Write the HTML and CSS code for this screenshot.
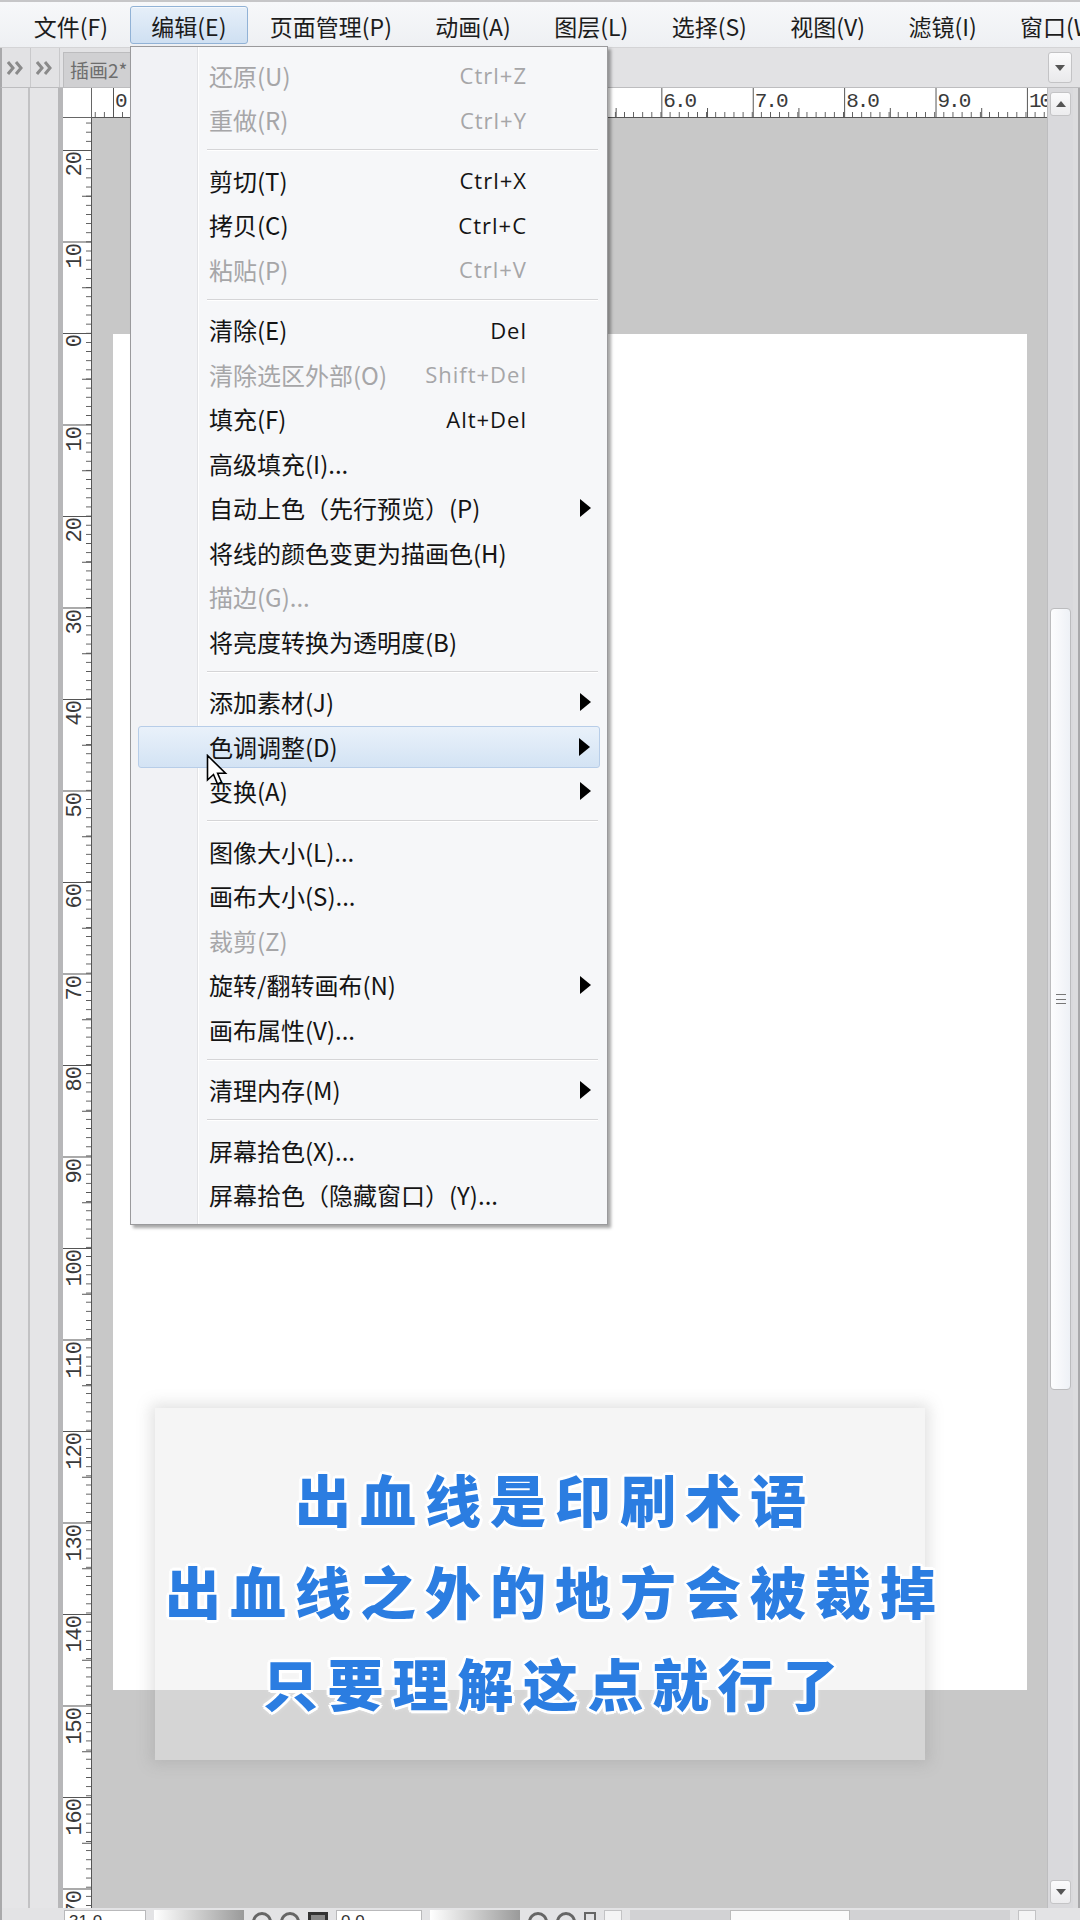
FILE: index.html
```html
<!DOCTYPE html>
<html lang="zh-CN">
<head>
<meta charset="utf-8">
<title>编辑菜单</title>
<link rel="stylesheet" href="styles.css">
</head>
<body>
<div class="app">
  <div class="menubar">
    <span class="mb-item">文件(F)</span>
    <span class="mb-item active">编辑(E)</span>
    <span class="mb-item">页面管理(P)</span>
    <span class="mb-item">动画(A)</span>
    <span class="mb-item">图层(L)</span>
    <span class="mb-item">选择(S)</span>
    <span class="mb-item">视图(V)</span>
    <span class="mb-item">滤镜(I)</span>
    <span class="mb-item">窗口(W)</span>
  </div>
  <div class="tabbar">
    <div class="dock"><svg width="18" height="16" viewBox="0 0 18 16"><path d="M1 2 L6 8 L1 14 M9 2 L14 8 L9 14" fill="none" stroke="#8a8a8a" stroke-width="3"/></svg></div>
    <div class="dock"><svg width="18" height="16" viewBox="0 0 18 16"><path d="M1 2 L6 8 L1 14 M9 2 L14 8 L9 14" fill="none" stroke="#8a8a8a" stroke-width="3"/></svg></div>
    <div class="tab">插画2*</div>
    <div class="tab-fill"></div>
    <div class="tab-drop"><svg width="10" height="6" viewBox="0 0 10 6"><path d="M0 0 H10 L5 6 Z" fill="#555"/></svg></div>
  </div>
  <div class="workspace">
    <div class="panel"></div>
    <div class="panel"></div>
    <div class="docarea">
      <div class="corner"></div>
      <div class="hruler">
        <span class="hl-lab">0</span><span class="hl-lab">1.0</span><span class="hl-lab">2.0</span><span class="hl-lab">3.0</span><span class="hl-lab">4.0</span><span class="hl-lab">5.0</span><span class="hl-lab">6.0</span><span class="hl-lab">7.0</span><span class="hl-lab">8.0</span><span class="hl-lab">9.0</span><span class="hl-lab">10.0</span>
      </div>
      <div class="vscroll">
        <div class="sb-btn"><svg width="10" height="6" viewBox="0 0 10 6"><path d="M0 6 H10 L5 0 Z" fill="#555"/></svg></div>
        <div class="sb-track"><div class="sb-thumb"><span class="grip"></span></div></div>
        <div class="sb-btn"><svg width="10" height="6" viewBox="0 0 10 6"><path d="M0 0 H10 L5 6 Z" fill="#555"/></svg></div>
      </div>
      <div class="vruler">
        <span class="vl-cell"><span class="vl-lab">20</span></span>
        <span class="vl-cell"><span class="vl-lab">10</span></span>
        <span class="vl-cell"><span class="vl-lab">0</span></span>
        <span class="vl-cell"><span class="vl-lab">10</span></span>
        <span class="vl-cell"><span class="vl-lab">20</span></span>
        <span class="vl-cell"><span class="vl-lab">30</span></span>
        <span class="vl-cell"><span class="vl-lab">40</span></span>
        <span class="vl-cell"><span class="vl-lab">50</span></span>
        <span class="vl-cell"><span class="vl-lab">60</span></span>
        <span class="vl-cell"><span class="vl-lab">70</span></span>
        <span class="vl-cell"><span class="vl-lab">80</span></span>
        <span class="vl-cell"><span class="vl-lab">90</span></span>
        <span class="vl-cell"><span class="vl-lab">100</span></span>
        <span class="vl-cell"><span class="vl-lab">110</span></span>
        <span class="vl-cell"><span class="vl-lab">120</span></span>
        <span class="vl-cell"><span class="vl-lab">130</span></span>
        <span class="vl-cell"><span class="vl-lab">140</span></span>
        <span class="vl-cell"><span class="vl-lab">150</span></span>
        <span class="vl-cell"><span class="vl-lab">160</span></span>
        <span class="vl-cell"><span class="vl-lab">170</span></span>
      </div>
      <div class="canvas"><div class="page"></div></div>
    </div>
    <div class="frame"></div>
  </div>
  <div class="statusbar">
    <span class="sf w50">31.0</span>
    <span class="sslider"></span>
    <span class="sicon round"></span><span class="sicon round"></span><span class="sicon sq"></span>
    <span class="sf w90">0.0</span>
    <span class="sslider"></span>
    <span class="sicon round"></span><span class="sicon round"></span><span class="sicon small"></span>
    <span class="sbtn"></span>
    <span class="strack"><span class="sthumb"></span></span>
    <span class="sbtn"></span>
  </div>
</div>

<div class="menu">
  <div class="mi dis"><span class="ml">还原(U)</span><span class="mk">Ctrl+Z</span><span class="ma"></span></div>
  <div class="mi dis"><span class="ml">重做(R)</span><span class="mk">Ctrl+Y</span><span class="ma"></span></div>
  <div class="msep"></div>
  <div class="mi"><span class="ml">剪切(T)</span><span class="mk">Ctrl+X</span><span class="ma"></span></div>
  <div class="mi"><span class="ml">拷贝(C)</span><span class="mk">Ctrl+C</span><span class="ma"></span></div>
  <div class="mi dis"><span class="ml">粘贴(P)</span><span class="mk">Ctrl+V</span><span class="ma"></span></div>
  <div class="msep"></div>
  <div class="mi"><span class="ml">清除(E)</span><span class="mk">Del</span><span class="ma"></span></div>
  <div class="mi dis"><span class="ml">清除选区外部(O)</span><span class="mk">Shift+Del</span><span class="ma"></span></div>
  <div class="mi"><span class="ml">填充(F)</span><span class="mk">Alt+Del</span><span class="ma"></span></div>
  <div class="mi"><span class="ml">高级填充(I)...</span><span class="mk"></span><span class="ma"></span></div>
  <div class="mi"><span class="ml">自动上色（先行预览）(P)</span><span class="mk"></span><span class="ma sub"></span></div>
  <div class="mi"><span class="ml">将线的颜色变更为描画色(H)</span><span class="mk"></span><span class="ma"></span></div>
  <div class="mi dis"><span class="ml">描边(G)...</span><span class="mk"></span><span class="ma"></span></div>
  <div class="mi"><span class="ml">将亮度转换为透明度(B)</span><span class="mk"></span><span class="ma"></span></div>
  <div class="msep"></div>
  <div class="mi"><span class="ml">添加素材(J)</span><span class="mk"></span><span class="ma sub"></span></div>
  <div class="mi hl"><span class="ml">色调调整(D)</span><span class="mk"></span><span class="ma sub"></span></div>
  <div class="mi"><span class="ml">变换(A)</span><span class="mk"></span><span class="ma sub"></span></div>
  <div class="msep"></div>
  <div class="mi"><span class="ml">图像大小(L)...</span><span class="mk"></span><span class="ma"></span></div>
  <div class="mi"><span class="ml">画布大小(S)...</span><span class="mk"></span><span class="ma"></span></div>
  <div class="mi dis"><span class="ml">裁剪(Z)</span><span class="mk"></span><span class="ma"></span></div>
  <div class="mi"><span class="ml">旋转/翻转画布(N)</span><span class="mk"></span><span class="ma sub"></span></div>
  <div class="mi"><span class="ml">画布属性(V)...</span><span class="mk"></span><span class="ma"></span></div>
  <div class="msep"></div>
  <div class="mi"><span class="ml">清理内存(M)</span><span class="mk"></span><span class="ma sub"></span></div>
  <div class="msep"></div>
  <div class="mi"><span class="ml">屏幕拾色(X)...</span><span class="mk"></span><span class="ma"></span></div>
  <div class="mi"><span class="ml">屏幕拾色（隐藏窗口）(Y)...</span><span class="mk"></span><span class="ma"></span></div>
</div>

<svg class="cursor" width="24" height="34" viewBox="0 0 24 34"><path d="M1.5 1.5 L1.5 26 L7.5 20.5 L11.5 30 L15.5 28.3 L11.6 19.2 L19.5 19.2 Z" fill="#fff" stroke="#000" stroke-width="1.6" stroke-linejoin="miter"/></svg>

<div class="caption-box"></div>
<div class="caption">
  <div class="cap-line">出血线是印刷术语</div>
  <div class="cap-line">出血线之外的地方会被裁掉</div>
  <div class="cap-line">只要理解这点就行了</div>
</div>
</body>
</html>
```

FILE: styles.css
```css
html, body {
  margin: 0;
  padding: 0;
}
body {
  width: 1080px;
  height: 1920px;
  overflow: hidden;
  position: relative;
  background: #e4e4e6;
  font-family: "Noto Sans CJK SC", "Noto Sans", sans-serif;
}

.app {
  display: flex;
  flex-direction: column;
  height: 1940px;
}

/* ---------- menu bar ---------- */
.menubar {
  height: 45px;
  flex: none;
  display: flex;
  align-items: center;
  padding-left: 12px;
  background: linear-gradient(#f7f8fa, #eef0f3);
  border-top: 2px solid #c6c6c8;
  border-bottom: 1px solid #d4d4d6;
  white-space: nowrap;
  overflow: hidden;
}
.mb-item {
  font-size: 23px;
  color: #1c1c1c;
  padding: 0 20.7px;
  height: 38px;
  line-height: 38px;
  border: 1px solid transparent;
  border-radius: 3px;
  box-sizing: border-box;
  flex: none;
}
.mb-item.active {
  background: linear-gradient(#e6eff9, #cfe0f2);
  border-color: #91b2d6;
  box-shadow: inset 0 1px 0 #f4f8fd;
}

/* ---------- tab bar ---------- */
.tabbar {
  height: 40px;
  flex: none;
  display: flex;
  align-items: stretch;
  background: #e2e2e4;
  border-left: 2px solid #a9a9ab;
  border-bottom: 1px solid #bdbdbf;
  box-sizing: border-box;
}
.dock {
  width: 28px;
  display: flex;
  align-items: center;
  justify-content: center;
  border-right: 1px solid #c9c9cb;
}
.tab {
  margin: 4px 0 0 3px;
  padding: 0 10px 0 6px;
  width: 110px;
  background: #d0d0d2;
  color: #6d6d6d;
  font-size: 19px;
  line-height: 34px;
  border: 1px solid #bcbcbe;
  border-bottom: none;
}
.tab-fill {
  flex: 1;
}
.tab-drop {
  width: 22px;
  margin: 4px 8px 4px 0;
  background: linear-gradient(#fbfbfc, #e9e9eb);
  border: 1px solid #c3c3c5;
  border-radius: 3px;
  display: flex;
  align-items: center;
  justify-content: center;
}

/* ---------- workspace ---------- */
.workspace {
  flex: 1;
  display: flex;
  min-height: 0;
  border-left: 2px solid #a9a9ab;
}
.panel {
  width: 26px;
  flex: none;
  background: #e5e5e7;
  border-right: 2px solid #c2c2c4;
}
.panel + .panel {
  width: 28px;
  border-right: 5px solid #b7b7b9;
}
.docarea {
  flex: none;
  display: grid;
  grid-template-columns: 29px 955px 26px;
  grid-template-rows: 30px 1fr;
  min-height: 0;
}
.frame {
  flex: 1;
  background: #dcdcde;
  border-right: 2px solid #a9a9ab;
}

.corner {
  background: #fff;
  border-right: 1px solid #666;
  border-bottom: 1px solid #666;
  box-sizing: border-box;
}

/* horizontal ruler */
.hruler {
  background-color: #fff;
  background-image:
    linear-gradient(to right, #555 1.2px, transparent 1.2px),
    linear-gradient(to right, #555 1.2px, transparent 1.2px),
    linear-gradient(to right, #555 1.2px, transparent 1.2px);
  background-size: 91.4px 100%, 91.4px 9px, 9.14px 5px;
  background-position: 21px 0, 66.7px 100%, 21px 100%;
  background-repeat: repeat-x;
  border-bottom: 1px solid #555;
  box-sizing: border-box;
  display: flex;
  padding-left: 23px;
  overflow: hidden;
  white-space: nowrap;
}
.hl-lab {
  flex: none;
  width: 91.4px;
  font-family: "Liberation Mono", monospace;
  font-size: 21px;
  letter-spacing: -2px;
  line-height: 27px;
  color: #3a3a3a;
}

/* vertical ruler */
.vruler {
  background-color: #fff;
  background-image:
    linear-gradient(to bottom, #555 1.2px, transparent 1.2px),
    linear-gradient(to bottom, #555 1.2px, transparent 1.2px),
    linear-gradient(to bottom, #555 1.2px, transparent 1.2px);
  background-size: 100% 91.5px, 9px 91.5px, 5px 9.15px;
  background-position: 0 32px, 100% 77.75px, 100% 32px;
  background-repeat: repeat-y;
  border-right: 1px solid #555;
  box-sizing: border-box;
  display: flex;
  flex-direction: column;
  padding-top: 34px;
  overflow: hidden;
}
.vl-cell {
  flex: none;
  height: 91.5px;
  padding-left: 3px;
  overflow: hidden;
  display: flex;
  align-items: flex-start;
}
.vl-lab {
  writing-mode: vertical-rl;
  transform: rotate(180deg);
  font-family: "Liberation Mono", monospace;
  font-size: 22px;
  letter-spacing: -1px;
  line-height: 20px;
  color: #3a3a3a;
}

/* canvas */
.canvas {
  background: #c8c8c8;
  padding: 216px 0 0 21px;
  overflow: hidden;
}
.page {
  width: 914px;
  height: 1356px;
  background: #fff;
}

/* scrollbar */
.vscroll {
  grid-column: 3;
  grid-row: 1 / span 2;
  display: flex;
  flex-direction: column;
  background: #d9d9dc;
  border-left: 1px solid #bdbdbf;
}
.sb-btn {
  height: 22px;
  margin: 4px 2px;
  border: 1px solid #c4c4c6;
  border-radius: 3px;
  background: linear-gradient(#fbfbfc, #ececee);
  display: flex;
  align-items: center;
  justify-content: center;
  flex: none;
}
.sb-track {
  flex: 1;
  padding-top: 488px;
}
.sb-thumb {
  height: 782px;
  margin: 0 2px;
  border: 1px solid #bcbcbe;
  border-radius: 4px;
  background: linear-gradient(to right, #fdfdfe, #eef1f6);
  display: flex;
  align-items: center;
  justify-content: center;
  box-sizing: border-box;
}
.grip {
  width: 10px;
  height: 8px;
  border-top: 1px solid #777;
  border-bottom: 1px solid #777;
  background: linear-gradient(#777, #777) center / 100% 1px no-repeat;
}

/* status bar */
.statusbar {
  height: 30px;
  flex: none;
  display: flex;
  align-items: flex-start;
  gap: 8px;
  padding: 2px 0 0 62px;
  background: #e3e3e5;
  border-left: 2px solid #a9a9ab;
}
.sf {
  height: 24px;
  background: #fff;
  border: 1px solid #b9b9bb;
  font-family: "Liberation Sans", sans-serif;
  font-size: 17px;
  line-height: 22px;
  padding-left: 4px;
  color: #333;
  box-sizing: border-box;
}
.w50 { width: 82px; }
.w90 { width: 86px; }
.sslider {
  width: 90px;
  height: 24px;
  background: linear-gradient(to right, #fff, #9a9a9a);
}
.sicon {
  width: 20px;
  height: 20px;
  border: 3px solid #666;
  box-sizing: border-box;
  margin-top: 2px;
}
.sicon.round { border-radius: 50%; }
.sicon.sq { border-color: #333; background: #888; }
.sicon.small { width: 12px; border-width: 2px; }
.sbtn {
  width: 16px;
  height: 22px;
  border: 1px solid #c3c3c5;
  background: #f4f4f5;
}
.strack {
  width: 380px;
  height: 22px;
  background: #d2d2d4;
  display: flex;
  padding-left: 100px;
  box-sizing: border-box;
}
.sthumb {
  width: 120px;
  height: 22px;
  background: #fafafa;
  border: 1px solid #bbb;
  box-sizing: border-box;
}

/* ---------- dropdown menu ---------- */
.menu {
  position: absolute;
  left: 130px;
  top: 46px;
  width: 478px;
  box-sizing: border-box;
  padding: 6px 0 7px;
  border: 1px solid #9a9a9c;
  background:
    linear-gradient(to right, #f1f2f5 0, #f1f2f5 66px, #e2e3e6 66px, #e2e3e6 67px, #ffffff 67px, #ffffff 68px, #f6f7f9 68px);
  box-shadow: 3px 3px 3px rgba(0, 0, 0, 0.35);
  font-size: 24px;
  color: #141414;
}
.mi {
  height: 44.5px;
  display: grid;
  grid-template-columns: 1fr auto 80px;
  align-items: center;
  padding-left: 78px;
  white-space: nowrap;
  box-sizing: border-box;
}
.mi.dis { color: #a6a6a8; }
.mk {
  font-family: "Open Sans", "Noto Sans", sans-serif;
  font-size: 22px;
  letter-spacing: 1px;
  text-align: right;
}
.ma.sub {
  justify-self: end;
  margin-right: 16px;
  width: 0;
  height: 0;
  border-top: 9px solid transparent;
  border-bottom: 9px solid transparent;
  border-left: 11px solid #000;
}
.mi.hl {
  height: 41.5px;
  margin: 2px 7px 1px;
  padding-left: 70px;
  grid-template-columns: 1fr auto 73px;
  border: 1px solid #b7cde8;
  border-radius: 3px;
  background: linear-gradient(#e9f1fa, #d3e3f4);
}
.mi.hl .ma.sub { margin-right: 9px; }
.msep {
  height: 16px;
  margin: 0 9px 0 76px;
  background: linear-gradient(#d5d5d7, #d5d5d7) 0 7px / 100% 1px no-repeat,
              linear-gradient(#fff, #fff) 0 8px / 100% 1px no-repeat;
}

/* cursor */
.cursor {
  position: absolute;
  left: 206px;
  top: 754px;
}

/* ---------- caption overlay ---------- */
.caption-box {
  position: absolute;
  left: 155px;
  top: 1408px;
  width: 770px;
  height: 352px;
  background: rgba(232, 232, 232, 0.42);
  box-shadow: 0 0 14px 4px rgba(120, 120, 120, 0.22);
}
.caption {
  position: absolute;
  left: 0;
  top: 1452px;
  width: 1110px;
  text-align: center;
  font-family: "Noto Sans CJK SC", sans-serif;
  font-weight: 900;
  font-size: 56px;
  line-height: 92px;
  letter-spacing: 9px;
  color: #2b7de1;
  text-shadow:
    3px 0 0 #fff, -3px 0 0 #fff, 0 3px 0 #fff, 0 -3px 0 #fff,
    2px 2px 0 #fff, -2px 2px 0 #fff, 2px -2px 0 #fff, -2px -2px 0 #fff,
    0 0 6px rgba(255, 255, 255, 0.9);
}
.cap-line {
  white-space: nowrap;
}
```
